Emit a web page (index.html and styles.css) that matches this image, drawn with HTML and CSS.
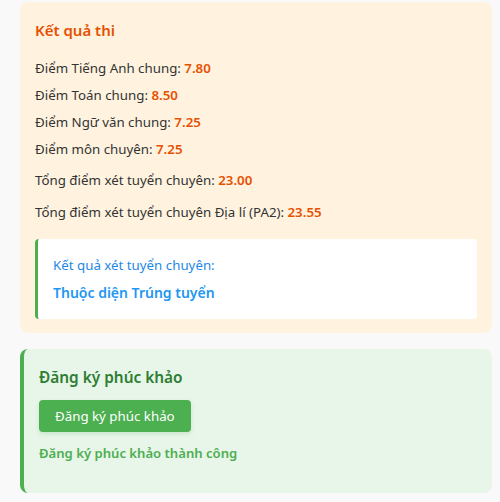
FILE: index.html
```html
<!DOCTYPE html>
<html lang="vi">
<head>
<meta charset="utf-8">
<link rel="stylesheet" href="styles.css">
</head>
<body>
<div class="page">
  <section class="card result">
    <h3 class="result-title">Kết quả thi</h3>
    <div class="scores">
      <div class="row">Điểm Tiếng Anh chung: <b class="num">7.80</b></div>
      <div class="row">Điểm Toán chung: <b class="num">8.50</b></div>
      <div class="row">Điểm Ngữ văn chung: <b class="num">7.25</b></div>
      <div class="row">Điểm môn chuyên: <b class="num">7.25</b></div>
    </div>
    <div class="row total first">Tổng điểm xét tuyển chuyên: <b class="num">23.00</b></div>
    <div class="row total">Tổng điểm xét tuyển chuyên Địa lí (PA2): <b class="num">23.55</b></div>
    <div class="outcome">
      <div class="outcome-label">Kết quả xét tuyển chuyên:</div>
      <div class="outcome-value">Thuộc diện Trúng tuyển</div>
    </div>
  </section>
  <section class="card review">
    <h3 class="review-title">Đăng ký phúc khảo</h3>
    <button class="btn">Đăng ký phúc khảo</button>
    <div class="success">Đăng ký phúc khảo thành công</div>
  </section>
</div>
</body>
</html>
```
FILE: styles.css
```css
html, body {
  margin: 0;
  padding: 0;
  background: #f9f9f9;
}
body {
  font-family: "Noto Sans", "Open Sans", sans-serif;
  font-size: 13.3px;
  color: #333;
}
.page {
  padding: 2px 8px 0 20px;
  display: flex;
  flex-direction: column;
  gap: 16px;
}
.card {
  border-radius: 8px;
}
.result {
  background: #fff3e0;
  padding: 17px 15px 14px;
}
.result-title {
  margin: 0 0 17px;
  font-size: 15px;
  line-height: 22px;
  font-weight: 600;
  color: #e65100;
}
.scores {
  display: flex;
  flex-direction: column;
  gap: 6px;
}
.row {
  line-height: 21px;
}
.total.first { margin-top: 10px; }
.total { margin-top: 11px; }
.num {
  color: #e65100;
  font-weight: 600;
}
.outcome {
  margin-top: 16px;
  background: #fff;
  border-left: 3px solid #4caf50;
  border-radius: 4px;
  padding: 16px 15px 15px;
}
.outcome-label {
  color: #1e88e5;
  line-height: 21px;
}
.outcome-value {
  margin-top: 6px;
  color: #2196f3;
  font-weight: 600;
  font-size: 14px;
  line-height: 22px;
}
.review {
  background: #e8f5e9;
  border-left: 4px solid #4caf50;
  padding: 18px 15px 30px;
  display: flex;
  flex-direction: column;
  align-items: flex-start;
}
.review-title {
  margin: 0;
  font-size: 15.4px;
  line-height: 22px;
  font-weight: 600;
  color: #2e7d32;
}
.btn {
  margin-top: 11px;
  height: 32px;
  padding: 0 16px;
  border: none;
  border-radius: 4px;
  background: #4caf50;
  color: #fff;
  font-family: inherit;
  font-size: 13.3px;
  box-shadow: 0 2px 4px rgba(76, 175, 80, 0.2);
}
.success {
  margin-top: 11px;
  line-height: 20px;
  font-size: 13.1px;
  color: #4caf50;
  font-weight: 600;
}
```
